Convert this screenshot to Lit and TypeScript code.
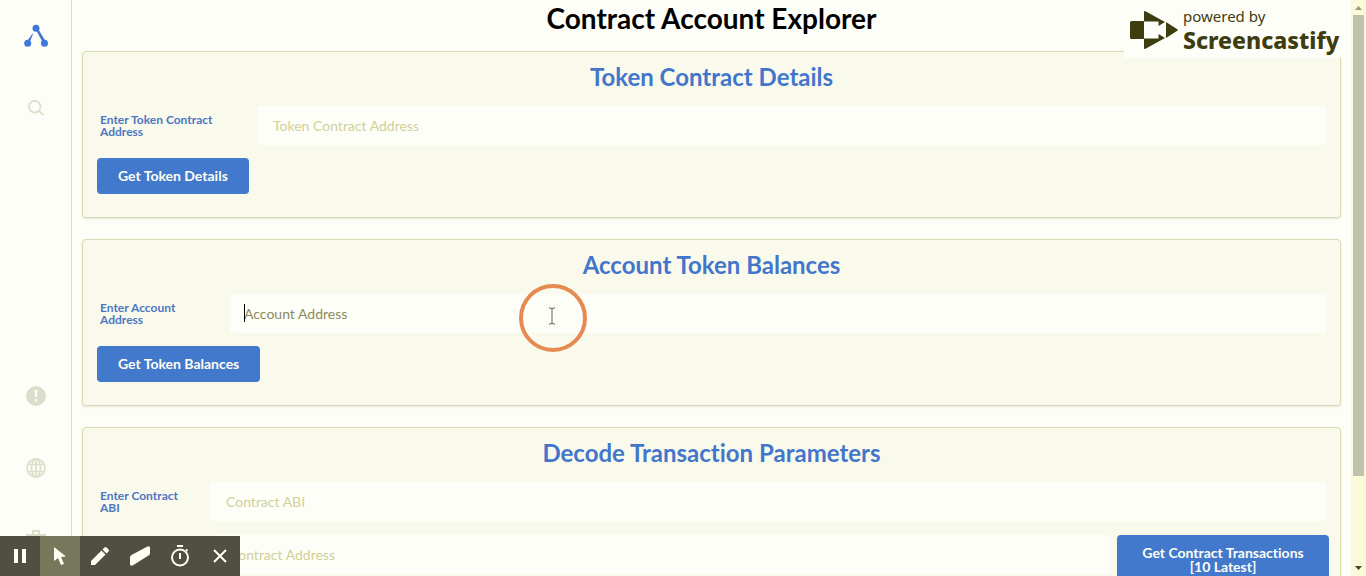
import { LitElement, html, css, svg } from "lit";
import { customElement } from "lit/decorators.js";

@customElement("app-root")
export class AppRoot extends LitElement {
  static styles = css`
    :host { display: block; height: 100vh; overflow: hidden; position: relative; background: #fefef8; font-family: Lato, sans-serif; font-variant-ligatures: none; color: #000; }
    * { box-sizing: border-box; }
    .shell { display: flex; height: 100%; }
    .side { width: 72px; flex: none; border-right: 1px solid #d3d8e6; display: flex; flex-direction: column; align-items: center; }
    .side a { width: 71px; height: 72px; flex: none; display: flex; align-items: center; justify-content: center; color: #dbdfca; }
    .side .gap { height: 216px; flex: none; }
    .side svg, .tools svg { display: block; }
    main { flex: 1; min-width: 0; overflow: hidden; padding: 0 10px; }
    h1 { margin: 0; height: 51px; padding-top: 1px; font-size: 28px; line-height: 34px; font-weight: 700; text-align: center; }
    .card { background: #fafaec; border: 1px solid #d9dab2; border-radius: 4px; box-shadow: 0 1px 2px rgba(110,110,60,.18); padding: 12px 14px 23px; margin-bottom: 21px; }
    h2 { margin: 0; font-size: 24px; line-height: 26px; font-weight: 700; color: #4376cb; text-align: center; }
    .field { display: flex; align-items: center; margin-top: 16px; }
    label { padding-left: 3px; font-size: 12px; line-height: 12px; font-weight: 700; color: #4c76c4; flex: none; width: 160px; padding-right: 30px; }
    .account label { width: 133px; }
    .abi label { width: 113px; }
    input { flex: 1; min-width: 0; height: 39px; border: 0; border-radius: 4px; background: #fefef8; padding: 0 16px 1px; font: 14px Lato, sans-serif; font-variant-ligatures: none; color: #333; outline: none; }
    input::placeholder { color: #d0d099; opacity: 1; }
    .account input { padding-left: 14px; }
    .account input::placeholder { color: #8b8b5c; }
    button { font: 700 14px/14px Lato, sans-serif; font-variant-ligatures: none; border: 0; cursor: pointer; }
    .primary { background: #4279cc; color: #fefef5; border-radius: 4px; height: 36px; padding: 0 21px; display: block; margin-top: 13px; }
    .row { display: flex; gap: 6px; margin: 14px -3px 0 116px; }
    .row .primary { margin: 0; width: 212px; height: 50px; }
    .scroll { width: 15px; flex: none; background: #fafad8; display: flex; flex-direction: column; align-items: center; }
    .thumb { width: 11px; flex: 0 0 80%; background: #c1c1b0; }
    .track { flex: 1; }
    .tools { position: absolute; left: 0; bottom: 0; display: flex; background: #4f4f42; }
    .tools button { width: 40px; height: 40px; padding: 0; background: none; color: #fffff4; display: grid; place-items: center; }
    .tools .on { background: #77775c; }
    .brand { position: absolute; top: 0; right: 24px; width: 218px; height: 58px; padding: 9px 0 0 6px; display: flex; gap: 5px; background: #fefef8; color: #3d3d0f; font-family: "Noto Sans", sans-serif; }
    .brand svg { margin-top: 2px; flex: none; }
    .names { display: flex; flex-direction: column; white-space: nowrap; }
    .powered { font-size: 15px; line-height: 15px; }
    .name { font-size: 23px; line-height: 32px; font-weight: 800; }
    .pointer { position: absolute; left: 519px; top: 284px; width: 68px; height: 68px; border: 4px solid #e58a50; border-radius: 50%; display: grid; place-items: center; padding: 0 2px 4px 0; pointer-events: none; }
    .caret { position: absolute; left: 14px; top: 10px; width: 1px; height: 18px; background: #000; }
    .box { flex: 1; min-width: 0; display: flex; position: relative; }
  `;

  render() {
    return html`
      <div class="shell">
        <nav class="side">
          <a href="#" aria-label="Home">${svg`<svg width="26" height="24" viewBox="0 0 26 24"><g fill="#4376cb"><path d="M3.500 18 9.500 9.500l.5.500L6 20zM12 4l2-1 9 15-3 1z"/></g><g fill="#3f78dc"><circle cx="13" cy="4.300" r="3.500"/><circle cx="4.700" cy="19.300" r="3.500"/><circle cx="21.500" cy="19.300" r="3.500"/></g></svg>`}</a>
          <a href="#" aria-label="Search">${svg`<svg width="16" height="16" viewBox="0 0 16 16" fill="none" stroke="currentColor" stroke-width="1.800"><circle cx="6.700" cy="6.700" r="5.800"/><path d="m11 11 4.400 4"/></svg>`}</a>
          <span class="gap"></span>
          <a href="#" aria-label="Alerts">${svg`<svg width="20" height="20" viewBox="0 0 20 20"><circle cx="10" cy="10" r="10" fill="currentColor"/><path d="M8.500 4h3l-.5 7H9zM8.800 13h2.500v2.500H8.800z" fill="#fefef8"/></svg>`}</a>
          <a href="#" aria-label="Network">${svg`<svg width="20" height="20" viewBox="0 0 20 20" fill="none" stroke="currentColor" stroke-width="1.700"><circle cx="10" cy="10" r="9.100"/><ellipse cx="10" cy="10" rx="4.500" ry="9.100"/><path d="M2 6.500h16M2 13.500h16M10 1v18"/></svg>`}</a>
          <a href="#" aria-label="Briefcase">${svg`<svg width="20" height="20" viewBox="0 0 20 20" fill="none" stroke="currentColor" stroke-width="2"><path d="M7 5V1h6v4"/><path d="M1 5h18v13H1z" fill="currentColor"/></svg>`}</a>
        </nav>
        <main>
          <h1>Contract Account Explorer</h1>
          <section class="card">
            <h2>Token Contract Details</h2>
            <div class="field"><label for="token">Enter Token Contract Address</label><input id="token" placeholder="Token Contract Address"></div>
            <button class="primary">Get Token Details</button>
          </section>
          <section class="card">
            <h2>Account Token Balances</h2>
            <div class="field account"><label for="account">Enter Account Address</label><div class="box"><input id="account" placeholder="Account Address"><span class="caret"></span></div></div>
            <button class="primary">Get Token Balances</button>
          </section>
          <section class="card">
            <h2>Decode Transaction Parameters</h2>
            <div class="field abi"><label for="abi">Enter Contract ABI</label><input id="abi" placeholder="Contract ABI"></div>
            <div class="row"><input aria-label="Contract Address" placeholder="Contract Address"><button class="primary">Get Contract Transactions [10 Latest]</button></div>
          </section>
        </main>
        <div class="scroll" aria-hidden="true">
          ${svg`<svg width="13" height="15" viewBox="0 0 13 15"><path d="m3 10 3.500-4L10 10z" fill="#999980"/></svg>`}
          <span class="thumb"></span><span class="track"></span>
          ${svg`<svg width="13" height="16" viewBox="0 0 13 16"><path d="m3 6 3.500 4L10 6z" fill="#444432"/></svg>`}
        </div>
      </div>
      <div class="brand">
        ${svg`<svg width="48" height="38" viewBox="0 0 48 38" fill="currentColor"><path d="M1.500 10H14v18H1.500Q0 28 0 26.500v-15Q0 10 1.500 10zM14 1q0-1.500 1.500-.700L35 11l-6.500 4v-4.500H14zM14 37q0 1.500 1.500.700L35 27l-6.500-4v4.500H14zM36 11l11.300 7.200q1 .8 0 1.600L36 27z"/></svg>`}
        <div class="names"><span class="powered">powered by</span><span class="name">Screencastify</span></div>
      </div>
      <div class="pointer">${svg`<svg width="8" height="18" viewBox="0 0 8 18" fill="none" stroke="#66664c"><path d="M1 1h2l1 1 1-1h2M4 2v14M1 17h2l1-1 1 1h2"/></svg>`}</div>
      <div class="tools">
        <button aria-label="Pause">${svg`<svg width="12" height="14" viewBox="0 0 12 14"><path d="M0 0h4v14H0zM8 0h4v14H8z" fill="currentColor"/></svg>`}</button>
        <button class="on" aria-label="Pointer">${svg`<svg width="12" height="18" viewBox="0 0 12 18"><path d="M0 0v14l4-3 3 7 3-1-3-7 5-.5z" fill="currentColor"/></svg>`}</button>
        <button aria-label="Pen">${svg`<svg width="18" height="18" viewBox="0 0 18 18" fill="currentColor"><path d="M0 14 10.500 3.500l4 4L4 18H0zM11.500 2.500l2-2q1-1 2 0l2 2q1 1 0 2l-2 2z"/></svg>`}</button>
        <button aria-label="Eraser">${svg`<svg width="20" height="20" viewBox="0 0 20 20"><path d="M1.500 9 17 .7Q20-.5 20 2v5q0 1.500-1.500 2.500L3 19.300Q0 20.500 0 18v-6.500Q0 10 1.500 9z" fill="currentColor"/></svg>`}</button>
        <button aria-label="Timer">${svg`<svg width="20" height="22" viewBox="0 0 20 22" fill="none" stroke="currentColor" stroke-width="2"><circle cx="10" cy="12.500" r="8"/><path d="M7 1h6M10 8v6M16 6l1.500-1.500"/></svg>`}</button>
        <button aria-label="Close">${svg`<svg width="14" height="14" viewBox="0 0 14 14" stroke="currentColor" stroke-width="2"><path d="m1 1 12 12M13 1 1 13"/></svg>`}</button>
      </div>`;
  }
}
